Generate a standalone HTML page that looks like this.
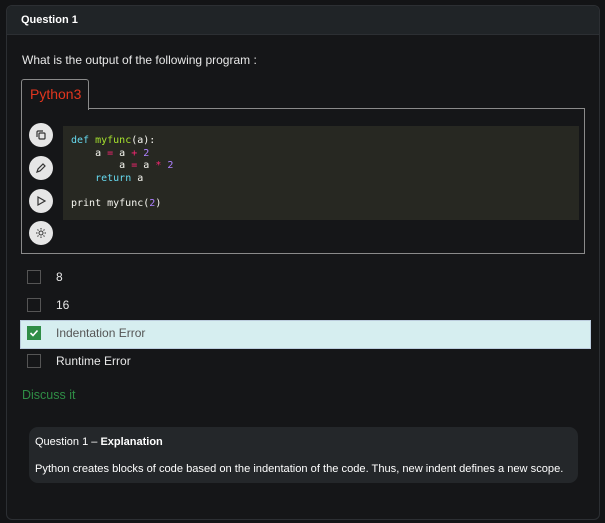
<!DOCTYPE html>
<html><head><style>
body{margin:0;width:605px;height:523px;background:#131416;font-family:"Liberation Sans",sans-serif;position:relative;overflow:hidden}
.card{position:absolute;left:6px;top:5px;width:592px;height:513px;border:1px solid #2c2f33;border-radius:6px;background:#151618;overflow:hidden}
.hdr{height:28px;background:#202427;border-bottom:1px solid #2c2f33;color:#fff;font-weight:bold;font-size:11px;line-height:28px;padding-left:14px}
.abs{position:absolute}
.q{left:15px;top:47px;color:#e8e8e8;font-size:12px}
.tab{left:14px;top:73px;width:66px;height:30px;border:1px solid #8a8a8a;border-bottom:none;background:#151618;color:#e2361f;font-size:14px;line-height:28px;text-indent:8px;z-index:2;border-radius:3px 3px 0 0}
.box{left:14px;top:102px;width:562px;height:144px;border:1px solid #8a8a8a}
.code{left:56px;top:120px;width:516px;height:94px;background:#272822;font-family:"DejaVu Sans Mono",monospace;font-size:10px;line-height:12.6px;color:#f8f8f2;padding:9px 0 0 8px;box-sizing:border-box;white-space:pre}
.btn{left:22px;width:24px;height:24px;border-radius:50%;background:#e6e6e6;display:flex;align-items:center;justify-content:center}
.k{color:#66d9ef}.f{color:#a6e22e}.o{color:#f92672}.n{color:#ae81ff}
.opt{left:20px;color:#e8e8e8;font-size:12px;display:flex;align-items:center}
.cb{width:14px;height:14px;border:1px solid #555;margin-right:15px;box-sizing:border-box}
.sel{left:13px;top:314px;width:569px;height:27px;background:#d6eef0;border:1px solid #bcd}
.exp{left:22px;top:421px;width:549px;height:56px;background:#24272a;border-radius:9px;color:#fff;font-size:11px}
</style></head><body>
<div class="card">
<div class="hdr">Question 1</div>
<div class="abs q">What is the output of the following program :</div>
<div class="abs tab">Python3</div>
<div class="abs box"></div>
<div class="abs code"><span class="k">def</span> <span class="f">myfunc</span>(a):
    a <span class="o">=</span> a <span class="o">+</span> <span class="n">2</span>
        a <span class="o">=</span> a <span class="o">*</span> <span class="n">2</span>
    <span class="k">return</span> a

print myfunc(<span class="n">2</span>)</div>
<div class="abs btn" style="top:117px"><svg width="12" height="12" viewBox="0 0 12 12" fill="none" stroke="#333" stroke-width="1.2"><rect x="4" y="4" width="6" height="6" rx="1"/><path d="M2 8V3a1 1 0 0 1 1-1h5"/></svg></div>
<div class="abs btn" style="top:150px"><svg width="12" height="12" viewBox="0 0 12 12" fill="none" stroke="#333" stroke-width="1.2"><path d="M2 10l1-3 5-5 2 2-5 5z"/></svg></div>
<div class="abs btn" style="top:183px"><svg width="12" height="12" viewBox="0 0 12 12" fill="none" stroke="#333" stroke-width="1.2"><path d="M3 2v8l7-4z"/></svg></div>
<div class="abs btn" style="top:215px"><svg width="12" height="12" viewBox="0 0 12 12" fill="none" stroke="#333" stroke-width="1"><circle cx="6" cy="6" r="2"/><path d="M6 1v1.5M6 9.5V11M1 6h1.5M9.5 6H11M2.5 2.5l1 1M8.5 8.5l1 1M2.5 9.5l1-1M8.5 3.5l1-1"/></svg></div>
<div class="abs opt" style="top:264px"><div class="cb"></div>8</div>
<div class="abs opt" style="top:292px"><div class="cb"></div>16</div>
<div class="abs sel"></div>
<div class="abs opt" style="top:320px;color:#555"><div class="cb" style="background:#2f8d46;border-color:#2f8d46;display:flex;align-items:center;justify-content:center"><svg width="10" height="10" viewBox="0 0 10 10"><path d="M1.5 5l2.5 2.5 4.5-5" fill="none" stroke="#fff" stroke-width="1.6"/></svg></div>Indentation Error</div>
<div class="abs opt" style="top:348px"><div class="cb"></div>Runtime Error</div>
<div class="abs" style="left:15px;top:382px;color:#2f8d46;font-size:12.5px">Discuss it</div>
<div class="abs exp"><div style="position:absolute;left:6px;top:9px">Question 1 – <b>Explanation</b></div><div style="position:absolute;left:6px;top:36px;font-size:11.1px;white-space:nowrap">Python creates blocks of code based on the indentation of the code. Thus, new indent defines a new scope.</div></div>
</div>
</body></html>
